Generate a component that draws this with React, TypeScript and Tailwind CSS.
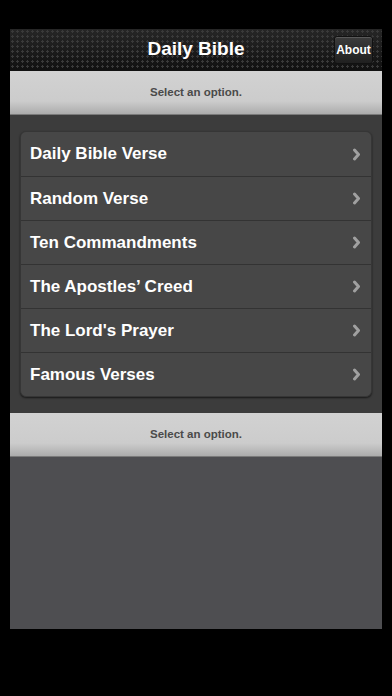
import React from 'react';

const items = [
  'Daily Bible Verse',
  'Random Verse',
  'Ten Commandments',
  'The Apostles’ Creed',
  "The Lord's Prayer",
  'Famous Verses',
];

function Chevron() {
  return (
    <svg width="9" height="13" viewBox="0 0 9 13" className="shrink-0">
      <path d="M2.5 2 L6.5 6.5 L2.5 11" fill="none" stroke="#a0a0a0" strokeWidth="3" strokeLinecap="round" strokeLinejoin="round" />
    </svg>
  );
}

function StatusBar() {
  return (
    <div className="h-[44px] bg-gradient-to-b from-[#d2d2d2] via-[#cccccc] via-70% to-[#acacac] border-b border-[#7a7a7a] flex items-center justify-center">
      <span className="text-[11.5px] font-bold text-[#4a4a4a]">Select an option.</span>
    </div>
  );
}

export default function App() {
  return (
    <div className="w-[392px] h-[696px] bg-black pt-[29px] px-[10px] font-['Liberation_Sans',Arial,sans-serif]">
      <div className="h-[600px] flex flex-col bg-[#4e4e51]">
        <div
          className="h-[42px] relative flex items-center justify-center border-b border-[#111] bg-[#1c1c1c]"
          style={{
            backgroundImage:
              'radial-gradient(circle, #3a3a3a 1px, transparent 1.4px), linear-gradient(#262626, #111)',
            backgroundSize: '5px 5px, 100% 100%',
          }}
        >
          <span className="text-white text-[19px] font-bold">Daily Bible</span>
          <div className="absolute right-[9px] top-[7px] h-[28px] w-[39px] flex items-center justify-center bg-gradient-to-b from-[#3c3c3c] to-[#202020] border border-[#111] rounded-[3px] shadow-[inset_0_1px_0_rgba(255,255,255,0.15)]">
            <span className="text-white text-[12px] font-bold">About</span>
          </div>
        </div>
        <StatusBar />
        <div className="bg-[#3c3c3c] px-[10px] pt-[16px] pb-[16px]">
          <div className="rounded-[6px] bg-[#474747] border border-[#363636] shadow-[0_1px_2px_rgba(0,0,0,0.6)] overflow-hidden">
            {items.map((t, i) => (
              <div
                key={t}
                className={`h-[44px] flex items-center justify-between pl-[9px] pr-[10px] ${i > 0 ? 'border-t border-[#333]' : ''}`}
              >
                <span className="text-white text-[17px] font-bold">{t}</span>
                <Chevron />
              </div>
            ))}
          </div>
        </div>
        <StatusBar />
        <div className="flex-1 bg-[#4e4e51]" />
      </div>
    </div>
  );
}
